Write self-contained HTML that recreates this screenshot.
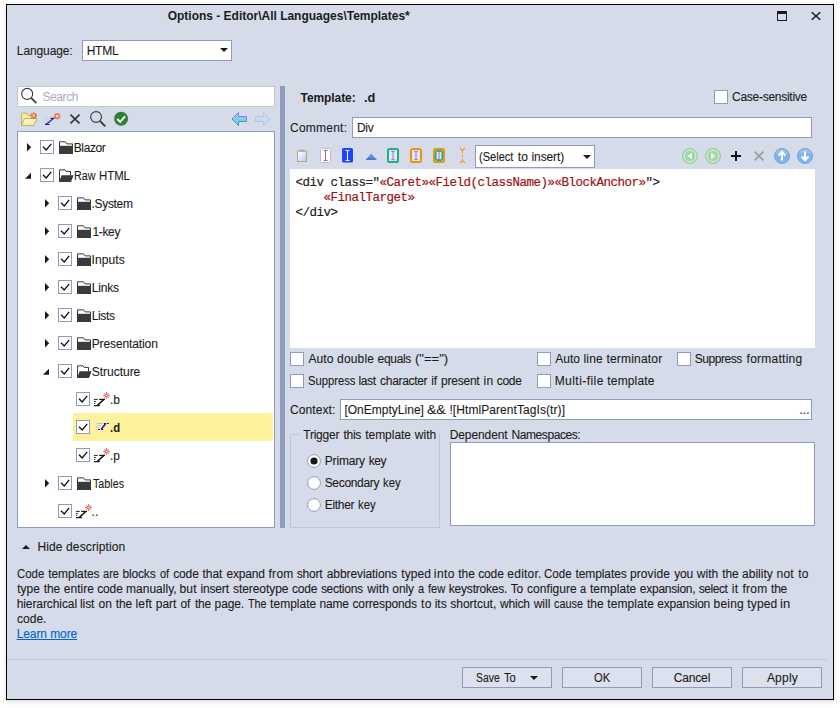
<!DOCTYPE html>
<html lang="en">
<head>
<meta charset="utf-8">
<title>Options - Editor\All Languages\Templates*</title>
<style>
*{box-sizing:border-box;margin:0;padding:0}
html,body{width:840px;height:708px;background:#fff;overflow:hidden}
body{position:relative;font-family:"Liberation Sans",sans-serif;font-size:12px;color:#1b1b1b;line-height:16px}
.a{position:absolute;display:block}
.win{left:6px;top:4px;width:828px;height:696px;border:1px solid #000;background:#d6dbe9;box-shadow:0 2px 5px rgba(0,0,0,.11)}
.t{position:absolute;white-space:nowrap;line-height:16px;height:16px;transform-origin:0 50%;-webkit-text-stroke:0.1px currentColor}
.b{font-weight:bold;-webkit-text-stroke:0}
.box{position:absolute;background:#fff;border:1px solid #8e9bbc}
.cb{position:absolute;width:14px;height:14px;background:#fff;border:1px solid #8e9bbc}
.btn{position:absolute;height:21px;border:1px solid #8e9bbc;background:#dde1ee}
.code{font-family:"Liberation Mono",monospace;font-size:12.5px;letter-spacing:-0.5px;line-height:15px;white-space:pre;color:#1e1e1e;-webkit-text-stroke:0.2px currentColor}
.code i{font-style:normal;color:#9c1212}
.sel{position:absolute;background:#fff29d}
</style>
</head>
<body>
<div class="a win"></div>

<div class="t b" id="t0" style="left:167.69px;top:8px;letter-spacing:-0.01px">Options - Editor\All Languages\Templates*</div>
<svg class="a" style="left:777px;top:11px" width="10" height="10" viewBox="0 0 10 10" ><rect x="0.5" y="0.5" width="9" height="9" fill="none" stroke="#1b1b1b"/><rect x="0" y="0" width="10" height="3" fill="#1b1b1b"/></svg>
<svg class="a" style="left:811px;top:11px" width="10" height="10" viewBox="0 0 10 10" ><path d="M0.7 1.2L9.3 8.8M9.3 1.2L0.7 8.8" stroke="#1b1b1b" stroke-width="1.5" fill="none"/></svg>
<div class="t" id="t1" style="left:16.84px;top:43px;letter-spacing:-0.11px">Language:</div>
<div class="box" style="left:82px;top:40px;width:150px;height:21px"></div>
<div class="t" id="t2" style="left:86.70px;top:43px;letter-spacing:-0.23px">HTML</div>
<svg class="a" style="left:220px;top:48px" width="8" height="4" viewBox="0 0 8 4" ><path d="M0 0H8L4 4Z" fill="#1b1b1b"/></svg>
<div class="box" style="left:17px;top:86px;width:258px;height:21px;border-color:#c8c8c8"></div>
<svg class="a" style="left:20px;top:87px" width="18" height="18" viewBox="0 0 18 18" ><circle cx="7.2" cy="6.9" r="5.5" fill="none" stroke="#3a3a3a" stroke-width="1.1"/><path d="M11.1 10.9L16.3 16.1" stroke="#3a3a3a" stroke-width="1.8"/></svg>
<div class="t" id="t3" style="left:42.46px;top:89px;letter-spacing:-0.41px;color:#a9acb8;-webkit-text-stroke:0">Search</div>
<svg class="a" style="left:20px;top:111px" width="18" height="16" viewBox="0 0 18 16" ><defs><linearGradient id="gf" x1="0" y1="0" x2="1" y2="1"><stop offset="0" stop-color="#fdfbe0"/><stop offset="1" stop-color="#ebe79a"/></linearGradient></defs><path d="M1.5 14.5V3.5Q1.5 2 3 2H6.5L8 4.2H14.5V7" fill="#f3ee9e" stroke="#b9b26a"/><path d="M1.5 14.5L4.5 7.5H17L14 14.5Z" fill="url(#gf)" stroke="#b9b26a"/><g stroke="#f0501c" stroke-width="1.1"><path d="M13.7 1.3V7.9M10.4 4.6H17M11.4 2.3L16 6.9M16 2.3L11.4 6.9"/></g><circle cx="13.7" cy="4.6" r="1.4" fill="#ffd468"/></svg>
<svg class="a" style="left:43px;top:111px" width="18" height="16" viewBox="0 0 18 16" ><path d="M1 7.5H5.5M1.5 10H5M1 12.5H3" stroke="#c6cad9" stroke-width="1" fill="none"/><path d="M7.5 7.4H10.6L3.2 13.3" stroke="#26269c" stroke-width="1.25" fill="none"/><path d="M2 13.4H6.6" stroke="#26269c" stroke-width="1.2" fill="none"/><g stroke="#f0501c" stroke-width="1.1"><path d="M14.2 2V8.6M10.9 5.3H17.5M11.9 3L16.5 7.6M16.5 3L11.9 7.6"/></g><circle cx="14.2" cy="5.3" r="1.3" fill="#ffe9b0"/></svg>
<svg class="a" style="left:69px;top:113px" width="12" height="12" viewBox="0 0 12 12" ><path d="M1.5 1.6L10.5 10.4M10.5 1.6L1.5 10.4" stroke="#333" stroke-width="1.6" fill="none"/></svg>
<svg class="a" style="left:89px;top:110px" width="18" height="18" viewBox="0 0 18 18" ><circle cx="7.1" cy="7" r="5.4" fill="none" stroke="#3a3a3a" stroke-width="1.1"/><path d="M11 11L16.3 16.3" stroke="#3a3a3a" stroke-width="1.8"/></svg>
<svg class="a" style="left:114px;top:111px" width="15" height="15" viewBox="0 0 15 15" ><circle cx="7.1" cy="7.8" r="7" fill="#2e8038"/><path d="M3.2 8L6.2 10.8L11 5.4" fill="none" stroke="#fff" stroke-width="2"/></svg>
<svg class="a" style="left:231px;top:111px" width="17" height="16" viewBox="0 0 17 16" ><defs><linearGradient id="ga" x1="0" y1="0" x2="0" y2="1"><stop offset="0" stop-color="#a9c8f8"/><stop offset=".5" stop-color="#6fd0ff"/><stop offset="1" stop-color="#8fd4f4"/></linearGradient></defs><linearGradient id="gs" x1="0" y1="0" x2="0" y2="1"><stop offset="0" stop-color="#9080d8"/><stop offset=".45" stop-color="#8c84d0"/><stop offset=".6" stop-color="#4e9a94"/><stop offset="1" stop-color="#4a948c"/></linearGradient><path d="M1 8L7.5 1.5V5.5H15.5V10.5H7.5V14.5Z" fill="url(#ga)" stroke="url(#gs)" stroke-width="1"/></svg>
<svg class="a" style="left:254px;top:111px" width="17" height="16" viewBox="0 0 17 16" ><path d="M16 8L9.5 1.5V5.5H1.5V10.5H9.5V14.5Z" fill="#c3dbf3" stroke="#b3c6de" stroke-width="1"/></svg>
<div class="box" style="left:17px;top:131px;width:258px;height:397px"></div>
<div class="sel" style="left:73px;top:413px;width:200px;height:28px"></div>
<svg class="a" style="left:27px;top:143px" width="5" height="9" viewBox="0 0 5 9" ><path d="M0 0L4.2 4.2L0 8.4Z" fill="#1b1b1b"/></svg>
<div class="cb" style="left:40px;top:140px"><svg width="12" height="12" viewBox="0 0 12 12" style="display:block"><path d="M2 5.8L5.2 9L10.2 2.8" fill="none" stroke="#111" stroke-width="1.3"/></svg></div>
<svg class="a" style="left:59px;top:141px" width="14" height="13" viewBox="0 0 14 13" ><path d="M0.5 0.8H6.5L8 2.9H13.5V12.5H0.5Z" fill="#fff" stroke="#3a3a3a" stroke-width="1"/><rect x="0" y="4.8" width="14" height="8.2" fill="#3a3a3a"/></svg>
<div class="t" id="t4" style="left:73.77px;top:140px;letter-spacing:-0.40px">Blazor</div>
<svg class="a" style="left:25px;top:172px" width="6" height="7" viewBox="0 0 6 7" ><path d="M6 0.8V6.8H0Z" fill="#1b1b1b"/></svg>
<div class="cb" style="left:40px;top:168px"><svg width="12" height="12" viewBox="0 0 12 12" style="display:block"><path d="M2 5.8L5.2 9L10.2 2.8" fill="none" stroke="#111" stroke-width="1.3"/></svg></div>
<svg class="a" style="left:59px;top:169px" width="15" height="13" viewBox="0 0 15 13" ><path d="M0.5 12.5V0.8H6L7 2.4H11.5V6.5" fill="#fff" stroke="#3a3a3a" stroke-width="1"/><path d="M2.6 6.3H14.6L12 13H0Z" fill="#3a3a3a"/></svg>
<div class="ln"><span class="t" id="t5" style="left:73.50px;top:168px;transform:scaleX(0.890)">Raw</span> <span class="t" id="t6" style="left:99.25px;top:168px;transform:scaleX(0.947)">HTML</span></div>
<svg class="a" style="left:45px;top:199px" width="5" height="9" viewBox="0 0 5 9" ><path d="M0 0L4.2 4.2L0 8.4Z" fill="#1b1b1b"/></svg>
<div class="cb" style="left:58px;top:196px"><svg width="12" height="12" viewBox="0 0 12 12" style="display:block"><path d="M2 5.8L5.2 9L10.2 2.8" fill="none" stroke="#111" stroke-width="1.3"/></svg></div>
<svg class="a" style="left:77px;top:197px" width="14" height="13" viewBox="0 0 14 13" ><path d="M0.5 0.8H6.5L8 2.9H13.5V12.5H0.5Z" fill="#fff" stroke="#3a3a3a" stroke-width="1"/><rect x="0" y="4.8" width="14" height="8.2" fill="#3a3a3a"/></svg>
<div class="t" id="t7" style="left:91.50px;top:196px;letter-spacing:-0.31px">.System</div>
<svg class="a" style="left:45px;top:227px" width="5" height="9" viewBox="0 0 5 9" ><path d="M0 0L4.2 4.2L0 8.4Z" fill="#1b1b1b"/></svg>
<div class="cb" style="left:58px;top:224px"><svg width="12" height="12" viewBox="0 0 12 12" style="display:block"><path d="M2 5.8L5.2 9L10.2 2.8" fill="none" stroke="#111" stroke-width="1.3"/></svg></div>
<svg class="a" style="left:77px;top:225px" width="14" height="13" viewBox="0 0 14 13" ><path d="M0.5 0.8H6.5L8 2.9H13.5V12.5H0.5Z" fill="#fff" stroke="#3a3a3a" stroke-width="1"/><rect x="0" y="4.8" width="14" height="8.2" fill="#3a3a3a"/></svg>
<div class="t" id="t8" style="left:92.46px;top:224px;letter-spacing:-0.34px">1-key</div>
<svg class="a" style="left:45px;top:255px" width="5" height="9" viewBox="0 0 5 9" ><path d="M0 0L4.2 4.2L0 8.4Z" fill="#1b1b1b"/></svg>
<div class="cb" style="left:58px;top:252px"><svg width="12" height="12" viewBox="0 0 12 12" style="display:block"><path d="M2 5.8L5.2 9L10.2 2.8" fill="none" stroke="#111" stroke-width="1.3"/></svg></div>
<svg class="a" style="left:77px;top:253px" width="14" height="13" viewBox="0 0 14 13" ><path d="M0.5 0.8H6.5L8 2.9H13.5V12.5H0.5Z" fill="#fff" stroke="#3a3a3a" stroke-width="1"/><rect x="0" y="4.8" width="14" height="8.2" fill="#3a3a3a"/></svg>
<div class="t" id="t9" style="left:91.54px;top:252px;letter-spacing:0.10px">Inputs</div>
<svg class="a" style="left:45px;top:283px" width="5" height="9" viewBox="0 0 5 9" ><path d="M0 0L4.2 4.2L0 8.4Z" fill="#1b1b1b"/></svg>
<div class="cb" style="left:58px;top:280px"><svg width="12" height="12" viewBox="0 0 12 12" style="display:block"><path d="M2 5.8L5.2 9L10.2 2.8" fill="none" stroke="#111" stroke-width="1.3"/></svg></div>
<svg class="a" style="left:77px;top:281px" width="14" height="13" viewBox="0 0 14 13" ><path d="M0.5 0.8H6.5L8 2.9H13.5V12.5H0.5Z" fill="#fff" stroke="#3a3a3a" stroke-width="1"/><rect x="0" y="4.8" width="14" height="8.2" fill="#3a3a3a"/></svg>
<div class="t" id="t10" style="left:91.70px;top:280px;letter-spacing:-0.16px">Links</div>
<svg class="a" style="left:45px;top:311px" width="5" height="9" viewBox="0 0 5 9" ><path d="M0 0L4.2 4.2L0 8.4Z" fill="#1b1b1b"/></svg>
<div class="cb" style="left:58px;top:308px"><svg width="12" height="12" viewBox="0 0 12 12" style="display:block"><path d="M2 5.8L5.2 9L10.2 2.8" fill="none" stroke="#111" stroke-width="1.3"/></svg></div>
<svg class="a" style="left:77px;top:309px" width="14" height="13" viewBox="0 0 14 13" ><path d="M0.5 0.8H6.5L8 2.9H13.5V12.5H0.5Z" fill="#fff" stroke="#3a3a3a" stroke-width="1"/><rect x="0" y="4.8" width="14" height="8.2" fill="#3a3a3a"/></svg>
<div class="t" id="t11" style="left:91.63px;top:308px;letter-spacing:-0.31px">Lists</div>
<svg class="a" style="left:45px;top:339px" width="5" height="9" viewBox="0 0 5 9" ><path d="M0 0L4.2 4.2L0 8.4Z" fill="#1b1b1b"/></svg>
<div class="cb" style="left:58px;top:336px"><svg width="12" height="12" viewBox="0 0 12 12" style="display:block"><path d="M2 5.8L5.2 9L10.2 2.8" fill="none" stroke="#111" stroke-width="1.3"/></svg></div>
<svg class="a" style="left:77px;top:337px" width="14" height="13" viewBox="0 0 14 13" ><path d="M0.5 0.8H6.5L8 2.9H13.5V12.5H0.5Z" fill="#fff" stroke="#3a3a3a" stroke-width="1"/><rect x="0" y="4.8" width="14" height="8.2" fill="#3a3a3a"/></svg>
<div class="t" id="t12" style="left:91.66px;top:336px;letter-spacing:-0.11px">Presentation</div>
<svg class="a" style="left:43px;top:368px" width="6" height="7" viewBox="0 0 6 7" ><path d="M6 0.8V6.8H0Z" fill="#1b1b1b"/></svg>
<div class="cb" style="left:58px;top:364px"><svg width="12" height="12" viewBox="0 0 12 12" style="display:block"><path d="M2 5.8L5.2 9L10.2 2.8" fill="none" stroke="#111" stroke-width="1.3"/></svg></div>
<svg class="a" style="left:77px;top:365px" width="15" height="13" viewBox="0 0 15 13" ><path d="M0.5 12.5V0.8H6L7 2.4H11.5V6.5" fill="#fff" stroke="#3a3a3a" stroke-width="1"/><path d="M2.6 6.3H14.6L12 13H0Z" fill="#3a3a3a"/></svg>
<div class="t" id="t13" style="left:91.69px;top:364px;letter-spacing:-0.01px">Structure</div>
<div class="cb" style="left:76px;top:392px"><svg width="12" height="12" viewBox="0 0 12 12" style="display:block"><path d="M2 5.8L5.2 9L10.2 2.8" fill="none" stroke="#111" stroke-width="1.3"/></svg></div>
<svg class="a" style="left:93px;top:392px" width="17" height="15" viewBox="0 0 17 15" ><path d="M0.9 7.4H4.8M0.9 9.4H2.9M0.9 11.4H2.3" stroke="#222" stroke-width="1" fill="none"/><path d="M6.2 7.4H12.1M0.9 13.6H6.9" stroke="#1c1c1c" stroke-width="1.1" fill="none"/><path d="M10.6 7.6L4.4 13.4" stroke="#1c1c1c" stroke-width="1.5" fill="none"/><g stroke="#e07272" stroke-width="1.05"><path d="M13.5 0V7M9.9 3.5H17.1M11.3 1.3L15.7 5.7M15.7 1.3L11.3 5.7"/></g><circle cx="13.5" cy="3.5" r="0.8" fill="#fff"/></svg>
<div class="t" id="t14" style="left:109.66px;top:392px;transform:scaleX(0.993)">.b</div>
<div class="cb" style="left:76px;top:420px"><svg width="12" height="12" viewBox="0 0 12 12" style="display:block"><path d="M2 5.8L5.2 9L10.2 2.8" fill="none" stroke="#111" stroke-width="1.3"/></svg></div>
<svg class="a" style="left:93px;top:419px" width="17" height="15" viewBox="0 0 17 15" ><defs><linearGradient id="gl1" x1="0" y1="0" x2="1" y2="0"><stop offset="0" stop-color="#f6f6fa"/><stop offset="1" stop-color="#a4a8dc"/></linearGradient></defs><rect x="1" y="4" width="7.8" height="1" fill="url(#gl1)"/><rect x="1" y="6" width="6.9" height="1" fill="url(#gl1)"/><rect x="1" y="8" width="4.9" height="1" fill="url(#gl1)"/><rect x="1" y="10" width="2.7" height="1" fill="url(#gl1)"/><path d="M10.8 4.5H13.2M14.1 4.5H16M5 10.5H7M8 10.5H10.2" stroke="#1414c4" stroke-width="1.1" fill="none"/><path d="M12.6 4.8L8.2 10.2" stroke="#1414c4" stroke-width="1.6" fill="none"/></svg>
<div class="t b" id="t15" style="left:110.41px;top:420px;transform:scaleX(0.944)">.d</div>
<div class="cb" style="left:76px;top:448px"><svg width="12" height="12" viewBox="0 0 12 12" style="display:block"><path d="M2 5.8L5.2 9L10.2 2.8" fill="none" stroke="#111" stroke-width="1.3"/></svg></div>
<svg class="a" style="left:93px;top:448px" width="17" height="15" viewBox="0 0 17 15" ><path d="M0.9 7.4H4.8M0.9 9.4H2.9M0.9 11.4H2.3" stroke="#222" stroke-width="1" fill="none"/><path d="M6.2 7.4H12.1M0.9 13.6H6.9" stroke="#1c1c1c" stroke-width="1.1" fill="none"/><path d="M10.6 7.6L4.4 13.4" stroke="#1c1c1c" stroke-width="1.5" fill="none"/><g stroke="#e07272" stroke-width="1.05"><path d="M13.5 0V7M9.9 3.5H17.1M11.3 1.3L15.7 5.7M15.7 1.3L11.3 5.7"/></g><circle cx="13.5" cy="3.5" r="0.8" fill="#fff"/></svg>
<div class="t" id="t16" style="left:109.66px;top:448px;transform:scaleX(0.993)">.p</div>
<svg class="a" style="left:45px;top:479px" width="5" height="9" viewBox="0 0 5 9" ><path d="M0 0L4.2 4.2L0 8.4Z" fill="#1b1b1b"/></svg>
<div class="cb" style="left:58px;top:476px"><svg width="12" height="12" viewBox="0 0 12 12" style="display:block"><path d="M2 5.8L5.2 9L10.2 2.8" fill="none" stroke="#111" stroke-width="1.3"/></svg></div>
<svg class="a" style="left:77px;top:477px" width="14" height="13" viewBox="0 0 14 13" ><path d="M0.5 0.8H6.5L8 2.9H13.5V12.5H0.5Z" fill="#fff" stroke="#3a3a3a" stroke-width="1"/><rect x="0" y="4.8" width="14" height="8.2" fill="#3a3a3a"/></svg>
<div class="t" id="t17" style="left:93.11px;top:476px;transform:scaleX(0.894)">Tables</div>
<div class="cb" style="left:58px;top:504px"><svg width="12" height="12" viewBox="0 0 12 12" style="display:block"><path d="M2 5.8L5.2 9L10.2 2.8" fill="none" stroke="#111" stroke-width="1.3"/></svg></div>
<svg class="a" style="left:75px;top:504px" width="17" height="15" viewBox="0 0 17 15" ><path d="M0.9 7.4H4.8M0.9 9.4H2.9M0.9 11.4H2.3" stroke="#222" stroke-width="1" fill="none"/><path d="M6.2 7.4H12.1M0.9 13.6H6.9" stroke="#1c1c1c" stroke-width="1.1" fill="none"/><path d="M10.6 7.6L4.4 13.4" stroke="#1c1c1c" stroke-width="1.5" fill="none"/><g stroke="#e07272" stroke-width="1.05"><path d="M13.5 0V7M9.9 3.5H17.1M11.3 1.3L15.7 5.7M15.7 1.3L11.3 5.7"/></g><circle cx="13.5" cy="3.5" r="0.8" fill="#fff"/></svg>
<div class="t" id="t18" style="left:91.56px;top:504px;letter-spacing:0.11px">..</div>
<div class="a" style="left:280px;top:86px;width:5px;height:442px;background:#8e9bbc"></div>
<div class="t b" id="t19" style="left:300.54px;top:90px;letter-spacing:-0.08px">Template:</div>
<div class="t b" id="t20" style="left:364.43px;top:90px;transform:scaleX(1.063)">.d</div>
<div class="cb" style="left:714px;top:90px"></div>
<div class="t" id="t21" style="left:732.01px;top:89px;letter-spacing:-0.27px">Case-sensitive</div>
<div class="t" id="t22" style="left:290.03px;top:120px;letter-spacing:0.23px">Comment:</div>
<div class="box" style="left:352px;top:117px;width:460px;height:21px"></div>
<div class="t" id="t23" style="left:356.88px;top:120px;letter-spacing:-0.18px">Div</div>
<svg class="a" style="left:296px;top:148px" width="12" height="15" viewBox="0 0 12 15" ><defs><linearGradient id="gp" x1="0" y1="0" x2="1" y2="1"><stop offset="0" stop-color="#fff"/><stop offset=".5" stop-color="#e8e4f8"/><stop offset="1" stop-color="#9cc8f4"/></linearGradient></defs><rect x="1.5" y="3" width="9" height="10.5" fill="url(#gp)" stroke="#b8a868" stroke-width="1"/><rect x="3.5" y="1.5" width="5" height="2.5" rx="1" fill="#b0b0b0"/></svg>
<svg class="a" style="left:320px;top:148px" width="11" height="15" viewBox="0 0 11 15" ><rect x="0.5" y="0.5" width="10" height="14" rx="1" fill="#fff" stroke="#bdbdbd"/><path d="M5.5 2.5V12.5M3.5 2.5H7.5M3.5 12.5H7.5" stroke="#a060c8" stroke-width="1" fill="none"/></svg>
<svg class="a" style="left:342px;top:148px" width="11" height="15" viewBox="0 0 11 15" ><rect x="0" y="0" width="11" height="14.5" rx="1.5" fill="#1f44ff"/><path d="M5.5 2.5V12.5M3.5 2.5H7.5M3.5 12.5H7.5" stroke="#fff" stroke-width="1" fill="none"/></svg>
<svg class="a" style="left:366px;top:153px" width="11" height="8" viewBox="0 0 11 8" ><path d="M0 6.5L5.2 0.8L10.4 6.5Z" fill="#5a8ad8"/><rect x="0" y="5.7" width="10.4" height="1" fill="#2a62d4"/></svg>
<svg class="a" style="left:387px;top:148px" width="12" height="15" viewBox="0 0 12 15" ><rect x="1" y="1" width="10" height="13" rx="1.5" fill="#e4e6f6" stroke="#12b682" stroke-width="2"/><path d="M6 3.5V11.5M4.2 3.3H7.8M4.2 11.7H7.8" stroke="#a060c4" stroke-width="0.9" fill="none"/></svg>
<svg class="a" style="left:410px;top:148px" width="12" height="15" viewBox="0 0 12 15" ><rect x="1" y="1" width="10" height="13" rx="1.5" fill="#e4e6f6" stroke="#e6960e" stroke-width="2"/><path d="M6 3.5V11.5M4.2 3.3H7.8M4.2 11.7H7.8" stroke="#a060c4" stroke-width="0.9" fill="none"/></svg>
<svg class="a" style="left:433px;top:148px" width="12" height="15" viewBox="0 0 12 15" ><rect x="1" y="1" width="10" height="13" rx="1.5" fill="#e4e6f6" stroke="#e6960e" stroke-width="2"/><rect x="2.8" y="2.8" width="6.4" height="9.4" rx="1.2" fill="#e4e6f6" stroke="#12b682" stroke-width="1.6"/><path d="M6 3.5V11.5M4.2 3.3H7.8M4.2 11.7H7.8" stroke="#a060c4" stroke-width="0.9" fill="none"/></svg>
<svg class="a" style="left:459px;top:147px" width="7" height="17" viewBox="0 0 7 17" ><path d="M1 1L3.5 3.5L6 1M1 16L3.5 13.5L6 16" fill="none" stroke="#f59a20" stroke-width="1.2"/><path d="M3.5 3.5V13.5" stroke="#f59a20" stroke-width="1" stroke-dasharray="2.5 1.5"/></svg>
<div class="box" style="left:475px;top:145px;width:120px;height:23px"></div>
<div class="ln"><span class="t" id="t24" style="left:479.07px;top:149px;transform:scaleX(0.922)">(Select</span> <span class="t" id="t25" style="left:517.66px;top:149px;letter-spacing:0.22px">to</span> <span class="t" id="t26" style="left:531.58px;top:149px;letter-spacing:-0.12px">insert)</span></div>
<svg class="a" style="left:583px;top:155px" width="8" height="4" viewBox="0 0 8 4" ><path d="M0 0H8L4 4Z" fill="#1b1b1b"/></svg>
<svg class="a" style="left:682px;top:148px" width="16" height="16" viewBox="0 0 16 16" ><circle cx="8" cy="8" r="7.6" fill="#9fd8a4" stroke="#90cf96" stroke-width="0.8"/><circle cx="8" cy="8" r="5.9" fill="none" stroke="#e2f2e4" stroke-width="1"/><path d="M10 4.8V11.2L5.2 8Z" fill="#eef8ef"/></svg>
<svg class="a" style="left:705px;top:148px" width="16" height="16" viewBox="0 0 16 16" ><circle cx="8" cy="8" r="7.6" fill="#9fd8a4" stroke="#90cf96" stroke-width="0.8"/><circle cx="8" cy="8" r="5.9" fill="none" stroke="#e2f2e4" stroke-width="1"/><path d="M6 4.8V11.2L10.8 8Z" fill="#eef8ef"/></svg>
<svg class="a" style="left:731px;top:151px" width="10" height="10" viewBox="0 0 10 10" ><path d="M5 0V10M0 5H10" stroke="#151515" stroke-width="2" fill="none"/></svg>
<svg class="a" style="left:754px;top:151px" width="10" height="10" viewBox="0 0 10 10" ><path d="M0.6 0.6L9.4 9.4M9.4 0.6L0.6 9.4" stroke="#9b9b9b" stroke-width="1.6" fill="none"/></svg>
<svg class="a" style="left:774px;top:148px" width="16" height="16" viewBox="0 0 16 16" ><circle cx="8" cy="8" r="7.6" fill="#80b4ec" stroke="#6f9fd8" stroke-width="0.8"/><path d="M2 6A6.3 6.3 0 0 1 14 6A9 5 0 0 0 2 6Z" fill="#a3cbf3" opacity=".7"/><path d="M8 12.5V4M4.5 7.5L8 4L11.5 7.5" fill="none" stroke="#fff" stroke-width="2"/></svg>
<svg class="a" style="left:797px;top:148px" width="16" height="16" viewBox="0 0 16 16" ><circle cx="8" cy="8" r="7.6" fill="#80b4ec" stroke="#6f9fd8" stroke-width="0.8"/><path d="M2 6A6.3 6.3 0 0 1 14 6A9 5 0 0 0 2 6Z" fill="#a3cbf3" opacity=".7"/><path d="M8 3.5V12M4.5 8.5L8 12L11.5 8.5" fill="none" stroke="#fff" stroke-width="2"/></svg>
<div class="a" style="left:290px;top:169px;width:525px;height:179px;background:#fff"></div>
<div class="a code" style="left:295.5px;top:176.4px">&lt;div class="<i>«Caret»«Field(className)»«BlockAnchor»</i>"&gt;
    <i>«FinalTarget»</i>
&lt;/div&gt;</div>
<div class="cb" style="left:290px;top:352px"></div>
<div class="ln"><span class="t" id="t27" style="left:308.40px;top:351px;letter-spacing:0.08px">Auto</span> <span class="t" id="t28" style="left:337.05px;top:351px;letter-spacing:0.18px">double</span> <span class="t" id="t29" style="left:377.60px;top:351px;letter-spacing:-0.32px">equals</span> <span class="t" id="t30" style="left:414.71px;top:351px;transform:scaleX(1.088)">("==")</span></div>
<div class="cb" style="left:537px;top:352px"></div>
<div class="ln"><span class="t" id="t31" style="left:555.13px;top:351px;letter-spacing:0.04px">Auto</span> <span class="t" id="t32" style="left:583.54px;top:351px;letter-spacing:0.16px">line</span> <span class="t" id="t33" style="left:606.47px;top:351px;letter-spacing:0.19px">terminator</span></div>
<div class="cb" style="left:677px;top:352px"></div>
<div class="ln"><span class="t" id="t34" style="left:694.80px;top:351px;letter-spacing:-0.45px">Suppress</span> <span class="t" id="t35" style="left:746.59px;top:351px;letter-spacing:0.25px">formatting</span></div>
<div class="cb" style="left:290px;top:374px"></div>
<div class="ln"><span class="t" id="t36" style="left:307.85px;top:373px;transform:scaleX(0.936)">Suppress</span> <span class="t" id="t37" style="left:358.39px;top:373px;letter-spacing:-0.32px">last</span> <span class="t" id="t38" style="left:380.09px;top:373px;letter-spacing:-0.31px">character</span> <span class="t" id="t39" style="left:431.28px;top:373px;letter-spacing:-0.16px">if</span> <span class="t" id="t40" style="left:440.94px;top:373px;letter-spacing:-0.21px">present</span> <span class="t" id="t41" style="left:483.53px;top:373px;letter-spacing:0.30px">in</span> <span class="t" id="t42" style="left:496.80px;top:373px;letter-spacing:-0.30px">code</span></div>
<div class="cb" style="left:537px;top:374px"></div>
<div class="ln"><span class="t" id="t43" style="left:554.67px;top:373px;letter-spacing:0.45px">Multi-file</span> <span class="t" id="t44" style="left:607.37px;top:373px;letter-spacing:0.14px">template</span></div>
<div class="t" id="t45" style="left:290.09px;top:402px;letter-spacing:0.07px">Context:</div>
<div class="box" style="left:340px;top:399px;width:472px;height:21px"></div>
<div class="ln"><span class="t" id="t46" style="left:344.43px;top:402px;letter-spacing:0.01px">[OnEmptyLine]</span> <span class="t" id="t47" style="left:427.18px;top:402px;transform:scaleX(1.165)">&amp;&amp;</span> <span class="t" id="t48" style="left:449.47px;top:402px;letter-spacing:0.07px">![HtmlParentTagIs(tr)]</span></div>
<div class="t" id="t49" style="left:799.59px;top:402px;letter-spacing:-0.06px">...</div>
<div class="a" style="left:290px;top:434px;width:150px;height:94px;border:1px solid #c0c6d9"></div>
<div class="a" style="left:299px;top:430px;width:140px;height:8px;background:#d6dbe9"></div>
<div class="ln"><span class="t" id="t50" style="left:303.29px;top:427px;letter-spacing:-0.24px">Trigger</span> <span class="t" id="t51" style="left:343.40px;top:427px;letter-spacing:-0.25px">this</span> <span class="t" id="t52" style="left:365.24px;top:427px;letter-spacing:-0.04px">template</span> <span class="t" id="t53" style="left:414.80px;top:427px">with</span></div>
<svg class="a" style="left:307px;top:454px" width="14" height="14" viewBox="0 0 14 14" ><circle cx="7" cy="7" r="6.4" fill="#fff" stroke="#8e9bbc" stroke-width="1"/><circle cx="7" cy="7" r="3.6" fill="#151515"/></svg>
<div class="ln"><span class="t" id="t54" style="left:324.70px;top:453px;letter-spacing:-0.15px">Primary</span> <span class="t" id="t55" style="left:368.78px;top:453px;letter-spacing:-0.41px">key</span></div>
<svg class="a" style="left:307px;top:476px" width="14" height="14" viewBox="0 0 14 14" ><circle cx="7" cy="7" r="6.4" fill="#fff" stroke="#8e9bbc" stroke-width="1"/></svg>
<div class="ln"><span class="t" id="t56" style="left:324.69px;top:475px;letter-spacing:-0.33px">Secondary</span> <span class="t" id="t57" style="left:383.22px;top:475px;transform:scaleX(0.940)">key</span></div>
<svg class="a" style="left:307px;top:498px" width="14" height="14" viewBox="0 0 14 14" ><circle cx="7" cy="7" r="6.4" fill="#fff" stroke="#8e9bbc" stroke-width="1"/></svg>
<div class="ln"><span class="t" id="t58" style="left:324.85px;top:497px;letter-spacing:-0.34px">Either</span> <span class="t" id="t59" style="left:358.30px;top:497px;transform:scaleX(0.942)">key</span></div>
<div class="ln"><span class="t" id="t60" style="left:449.70px;top:427px;letter-spacing:-0.09px">Dependent</span> <span class="t" id="t61" style="left:511.44px;top:427px;letter-spacing:-0.41px">Namespaces:</span></div>
<div class="box" style="left:450px;top:442px;width:365px;height:84px"></div>
<svg class="a" style="left:22px;top:544px" width="8" height="5" viewBox="0 0 8 5" ><path d="M0 5H8L4 1Z" fill="#1b1b1b"/></svg>
<div class="ln"><span class="t" id="t62" style="left:37.44px;top:539px;letter-spacing:0.13px">Hide</span> <span class="t" id="t63" style="left:66.07px;top:539px;letter-spacing:0.12px">description</span></div>
<div class="ln"><span class="t d" id="t64" style="left:16.95px;top:566px;transform:scaleX(0.952)">Code</span> <span class="t d" id="t65" style="left:48.15px;top:566px;letter-spacing:-0.08px">templates</span> <span class="t d" id="t66" style="left:102.99px;top:566px;transform:scaleX(0.923)">are</span> <span class="t d" id="t67" style="left:122.45px;top:566px;letter-spacing:-0.15px">blocks</span> <span class="t d" id="t68" style="left:159.87px;top:566px;transform:scaleX(0.912)">of</span> <span class="t d" id="t69" style="left:173.27px;top:566px;letter-spacing:-0.16px">code</span> <span class="t d" id="t70" style="left:202.60px;top:566px;letter-spacing:-0.08px">that</span> <span class="t d" id="t71" style="left:226.53px;top:566px;letter-spacing:-0.20px">expand</span> <span class="t d" id="t72" style="left:268.50px;top:566px;letter-spacing:0.28px">from</span> <span class="t d" id="t73" style="left:296.74px;top:566px;letter-spacing:-0.19px">short</span> <span class="t d" id="t74" style="left:326.75px;top:566px;letter-spacing:-0.09px">abbreviations</span> <span class="t d" id="t75" style="left:401.32px;top:566px;letter-spacing:0.05px">typed</span> <span class="t d" id="t76" style="left:433.86px;top:566px;letter-spacing:0.37px">into</span> <span class="t d" id="t77" style="left:458.24px;top:566px;letter-spacing:-0.04px">the</span> <span class="t d" id="t78" style="left:478.28px;top:566px;letter-spacing:-0.16px">code</span> <span class="t d" id="t79" style="left:507.37px;top:566px;letter-spacing:0.21px">editor.</span> <span class="t d" id="t80" style="left:544.44px;top:566px;transform:scaleX(0.961)">Code</span> <span class="t d" id="t81" style="left:575.57px;top:566px;letter-spacing:-0.11px">templates</span> <span class="t d" id="t82" style="left:630.05px;top:566px;letter-spacing:0.07px">provide</span> <span class="t d" id="t83" style="left:674.14px;top:566px;letter-spacing:-0.17px">you</span> <span class="t d" id="t84" style="left:696.71px;top:566px;letter-spacing:0.07px">with</span> <span class="t d" id="t85" style="left:722.26px;top:566px;letter-spacing:-0.10px">the</span> <span class="t d" id="t86" style="left:742.01px;top:566px;letter-spacing:0.02px">ability</span> <span class="t d" id="t87" style="left:776.61px;top:566px;letter-spacing:0.20px">not</span> <span class="t d" id="t88" style="left:798.13px;top:566px;letter-spacing:0.33px">to</span></div>
<div class="ln"><span class="t d" id="t89" style="left:17.26px;top:581px;letter-spacing:-0.02px">type</span> <span class="t d" id="t90" style="left:43.80px;top:581px;letter-spacing:-0.10px">the</span> <span class="t d" id="t91" style="left:63.73px;top:581px;letter-spacing:0.03px">entire</span> <span class="t d" id="t92" style="left:97.15px;top:581px;letter-spacing:-0.12px">code</span> <span class="t d" id="t93" style="left:125.99px;top:581px;letter-spacing:0.02px">manually,</span> <span class="t d" id="t94" style="left:179.48px;top:581px;letter-spacing:0.18px">but</span> <span class="t d" id="t95" style="left:200.52px;top:581px;letter-spacing:-0.17px">insert</span> <span class="t d" id="t96" style="left:232.94px;top:581px;letter-spacing:-0.05px">stereotype</span> <span class="t d" id="t97" style="left:291.88px;top:581px;letter-spacing:-0.13px">code</span> <span class="t d" id="t98" style="left:320.89px;top:581px;letter-spacing:-0.26px">sections</span> <span class="t d" id="t99" style="left:367.22px;top:581px;letter-spacing:0.16px">with</span> <span class="t d" id="t100" style="left:392.37px;top:581px;letter-spacing:-0.09px">only</span> <span class="t d" id="t101" style="left:418.15px;top:581px;transform:scaleX(0.920)">a</span> <span class="t d" id="t102" style="left:427.71px;top:581px;transform:scaleX(0.928)">few</span> <span class="t d" id="t103" style="left:448.84px;top:581px;letter-spacing:-0.21px">keystrokes.</span> <span class="t d" id="t104" style="left:510.69px;top:581px;letter-spacing:-0.10px">To</span> <span class="t d" id="t105" style="left:527.06px;top:581px;letter-spacing:0.04px">configure</span> <span class="t d" id="t106" style="left:580.42px;top:581px;transform:scaleX(0.920)">a</span> <span class="t d" id="t107" style="left:589.95px;top:581px;letter-spacing:0.03px">template</span> <span class="t d" id="t108" style="left:639.75px;top:581px;letter-spacing:-0.24px">expansion,</span> <span class="t d" id="t109" style="left:698.76px;top:581px;letter-spacing:-0.45px">select</span> <span class="t d" id="t110" style="left:731.68px;top:581px;letter-spacing:0.45px">it</span> <span class="t d" id="t111" style="left:742.54px;top:581px;letter-spacing:0.24px">from</span> <span class="t d" id="t112" style="left:771.06px;top:581px;letter-spacing:-0.23px">the</span></div>
<div class="ln"><span class="t d" id="t113" style="left:16.71px;top:596px;letter-spacing:-0.09px">hierarchical</span> <span class="t d" id="t114" style="left:80.00px;top:596px;letter-spacing:-0.09px">list</span> <span class="t d" id="t115" style="left:98.59px;top:596px;letter-spacing:-0.12px">on</span> <span class="t d" id="t116" style="left:115.85px;top:596px;letter-spacing:-0.15px">the</span> <span class="t d" id="t117" style="left:135.58px;top:596px;letter-spacing:0.11px">left</span> <span class="t d" id="t118" style="left:155.71px;top:596px">part</span> <span class="t d" id="t119" style="left:180.55px;top:596px;letter-spacing:-0.22px">of</span> <span class="t d" id="t120" style="left:194.94px;top:596px;letter-spacing:-0.21px">the</span> <span class="t d" id="t121" style="left:214.61px;top:596px;letter-spacing:-0.15px">page.</span> <span class="t d" id="t122" style="left:247.84px;top:596px;transform:scaleX(0.897)">The</span> <span class="t d" id="t123" style="left:270.12px;top:596px;letter-spacing:0.01px">template</span> <span class="t d" id="t124" style="left:319.43px;top:596px;letter-spacing:-0.19px">name</span> <span class="t d" id="t125" style="left:352.54px;top:596px;letter-spacing:-0.16px">corresponds</span> <span class="t d" id="t126" style="left:421.10px;top:596px;letter-spacing:0.27px">to</span> <span class="t d" id="t127" style="left:434.77px;top:596px;letter-spacing:-0.06px">its</span> <span class="t d" id="t128" style="left:450.28px;top:596px">shortcut,</span> <span class="t d" id="t129" style="left:499.96px;top:596px;letter-spacing:-0.16px">which</span> <span class="t d" id="t130" style="left:533.71px;top:596px">will</span> <span class="t d" id="t131" style="left:554.39px;top:596px;transform:scaleX(0.903)">cause</span> <span class="t d" id="t132" style="left:587.01px;top:596px;letter-spacing:0.03px">the</span> <span class="t d" id="t133" style="left:607.32px;top:596px;letter-spacing:0.07px">template</span> <span class="t d" id="t134" style="left:657.20px;top:596px;letter-spacing:-0.20px">expansion</span> <span class="t d" id="t135" style="left:713.61px;top:596px;letter-spacing:0.18px">being</span> <span class="t d" id="t136" style="left:747.31px;top:596px;letter-spacing:0.14px">typed</span> <span class="t d" id="t137" style="left:779.87px;top:596px;transform:scaleX(1.081)">in</span></div>
<div class="t d" id="t138" style="left:17.01px;top:611px;letter-spacing:0.01px">code.</div>
<div class="t d" id="t139" style="left:16.66px;top:626px;letter-spacing:-0.09px;color:#0066cc;text-decoration:underline">Learn more</div>
<div class="a" style="left:7px;top:659px;width:820px;height:1px;background:#bec5d9"></div>
<div class="btn" style="left:462px;top:667px;width:90px"></div>
<div class="ln"><span class="t" id="t140" style="left:476.15px;top:670px;transform:scaleX(0.870)">Save</span> <span class="t" id="t141" style="left:503.82px;top:670px;transform:scaleX(0.934)">To</span></div>
<svg class="a" style="left:530px;top:676px" width="8" height="4" viewBox="0 0 8 4" ><path d="M0 0H8L4 4Z" fill="#1b1b1b"/></svg>
<div class="btn" style="left:562px;top:667px;width:80px"></div>
<div class="t" id="t142" style="left:594.02px;top:670px;transform:scaleX(0.934)">OK</div>
<div class="btn" style="left:652px;top:667px;width:80px"></div>
<div class="t" id="t143" style="left:673.63px;top:670px;letter-spacing:-0.13px">Cancel</div>
<div class="btn" style="left:742px;top:667px;width:80px"></div>
<div class="t" id="t144" style="left:766.92px;top:670px;letter-spacing:0.21px">Apply</div>
</body>
</html>
